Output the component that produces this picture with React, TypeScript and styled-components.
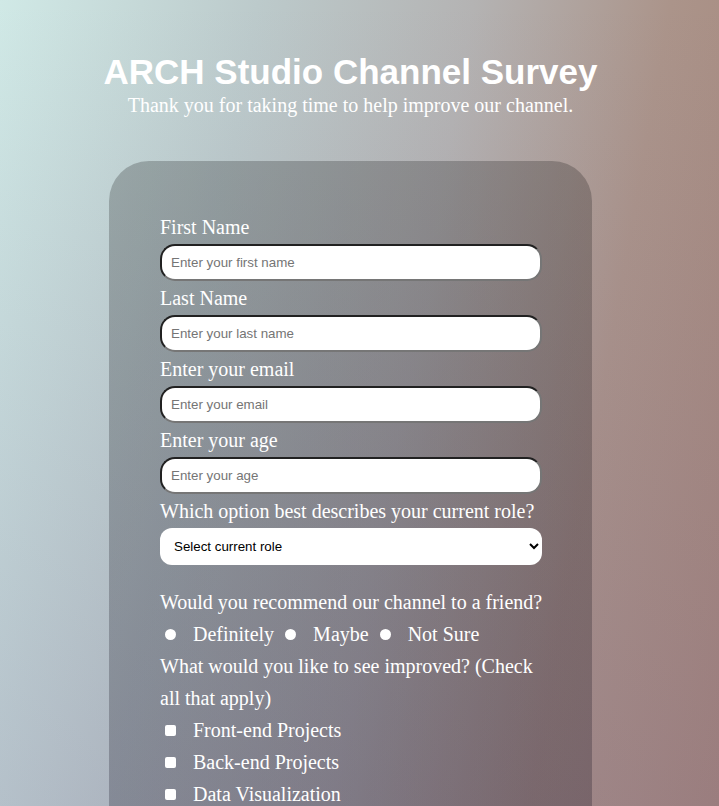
import React from "react";
import styled, { createGlobalStyle } from "styled-components";

const GlobalStyle = createGlobalStyle`
  html, body {
    margin: 0;
    padding: 0;
  }
  body {
    font-family: "Liberation Serif", "Times New Roman", serif;
    color: #ffffff;
  }
`;

const Page = styled.div`
  min-height: 100vh;
  box-sizing: border-box;
  padding: 52px 18px 60px 0;
  display: flex;
  flex-direction: column;
  align-items: center;
  background:
    linear-gradient(to bottom, rgba(110, 90, 150, 0) 0%, rgba(105, 85, 140, 0.18) 100%),
    linear-gradient(100deg, #d0e9e6 0%, #bccacb 30%, #b4b3b3 55%, #ab948a 78%, #a5867b 100%);
  background-attachment: fixed;
`;

const Title = styled.h1`
  margin: 0;
  font-family: "Liberation Sans", Arial, sans-serif;
  font-weight: 700;
  font-size: 35px;
  line-height: 40px;
  color: #ffffff;
  text-align: center;
`;

const Subtitle = styled.p`
  margin: 2px 0 0;
  font-size: 20px;
  line-height: 23px;
  color: #ffffff;
  text-align: center;
`;

const Card = styled.form`
  width: 483px;
  box-sizing: border-box;
  margin-top: 44px;
  padding: 49px 50px 48px 51px;
  border-radius: 40px;
  background: linear-gradient(to bottom, rgba(0, 0, 0, 0.22) 0%, rgba(10, 5, 30, 0.26) 100%);
  display: flex;
  flex-direction: column;
`;

const FieldLabel = styled.label`
  display: block;
  font-size: 20px;
  line-height: 34px;
  color: #ffffff;
`;

const TextInput = styled.input`
  display: block;
  width: 100%;
  height: 37px;
  box-sizing: border-box;
  margin: 0;
  padding: 0 9px;
  border: 2px inset #767676;
  border-radius: 15px;
  background: #ffffff;
  font-family: "Liberation Sans", Arial, sans-serif;
  font-size: 13.33px;
  color: #000;
  &::placeholder {
    color: #757575;
  }
`;

const Select = styled.select`
  display: block;
  width: 100%;
  height: 37px;
  box-sizing: border-box;
  margin: 0 0 21px;
  padding: 0 6px 0 10px;
  border: none;
  border-radius: 12px;
  background: #ffffff;
  font-family: "Liberation Sans", Arial, sans-serif;
  font-size: 13.33px;
  color: #000;
`;

const Question = styled.p<{ $nowrap?: boolean }>`
  margin: 0;
  font-size: 20px;
  line-height: 32px;
  color: #ffffff;
  white-space: ${(p) => (p.$nowrap ? "nowrap" : "normal")};
`;

const RadioRow = styled.div`
  display: flex;
  align-items: center;
  gap: 6px;
  height: 32px;
`;

const OptionLabel = styled.label`
  display: flex;
  align-items: center;
  font-size: 20px;
  line-height: 32px;
  color: #ffffff;
`;

const Radio = styled.input`
  appearance: none;
  -webkit-appearance: none;
  width: 11px;
  height: 11px;
  margin: 0 17px 0 5px;
  border-radius: 50%;
  background: #ffffff;
  flex: none;
`;

const Checkbox = styled.input`
  appearance: none;
  -webkit-appearance: none;
  width: 11px;
  height: 11px;
  margin: 0 17px 0 5px;
  border-radius: 2px;
  background: #ffffff;
  flex: none;
`;

const TextArea = styled.textarea`
  display: block;
  width: 100%;
  height: 100px;
  box-sizing: border-box;
  margin: 0 0 20px;
  padding: 8px 9px;
  border: 2px inset #767676;
  border-radius: 15px;
  font-family: "Liberation Sans", Arial, sans-serif;
  font-size: 13.33px;
  resize: none;
`;

const SubmitButton = styled.button`
  align-self: center;
  width: 100%;
  height: 40px;
  border: none;
  border-radius: 15px;
  background: #ffffff;
  font-family: "Liberation Sans", Arial, sans-serif;
  font-size: 16px;
  color: #333;
`;

const fields = [
  { id: "first-name", label: "First Name", type: "text", placeholder: "Enter your first name" },
  { id: "last-name", label: "Last Name", type: "text", placeholder: "Enter your last name" },
  { id: "email", label: "Enter your email", type: "email", placeholder: "Enter your email" },
  { id: "age", label: "Enter your age", type: "number", placeholder: "Enter your age" },
];

const recommendOptions = ["Definitely", "Maybe", "Not Sure"];

const improvements = [
  "Front-end Projects",
  "Back-end Projects",
  "Data Visualization",
  "Challenges",
  "Open Source Community",
  "Videos",
];

export default function App() {
  return (
    <>
      <GlobalStyle />
      <Page>
        <Title>ARCH Studio Channel Survey</Title>
        <Subtitle>Thank you for taking time to help improve our channel.</Subtitle>
        <Card onSubmit={(e) => e.preventDefault()}>
          {fields.map((f) => (
            <React.Fragment key={f.id}>
              <FieldLabel htmlFor={f.id}>{f.label}</FieldLabel>
              <TextInput id={f.id} type={f.type} placeholder={f.placeholder} />
            </React.Fragment>
          ))}
          <FieldLabel htmlFor="role">Which option best describes your current role?</FieldLabel>
          <Select id="role" defaultValue="">
            <option value="" disabled>
              Select current role
            </option>
            <option value="student">Student</option>
            <option value="job">Full Time Job</option>
            <option value="learner">Full Time Learner</option>
            <option value="other">Other</option>
          </Select>
          <Question $nowrap>Would you recommend our channel to a friend?</Question>
          <RadioRow>
            {recommendOptions.map((o) => (
              <OptionLabel key={o}>
                <Radio type="radio" name="recommend" value={o} />
                {o}
              </OptionLabel>
            ))}
          </RadioRow>
          <Question>What would you like to see improved? (Check all that apply)</Question>
          {improvements.map((i) => (
            <OptionLabel key={i}>
              <Checkbox type="checkbox" value={i} />
              {i}
            </OptionLabel>
          ))}
          <FieldLabel htmlFor="comments">Any comments or suggestions?</FieldLabel>
          <TextArea id="comments" placeholder="Enter your comment here..." />
          <SubmitButton type="submit">Submit</SubmitButton>
        </Card>
      </Page>
    </>
  );
}
